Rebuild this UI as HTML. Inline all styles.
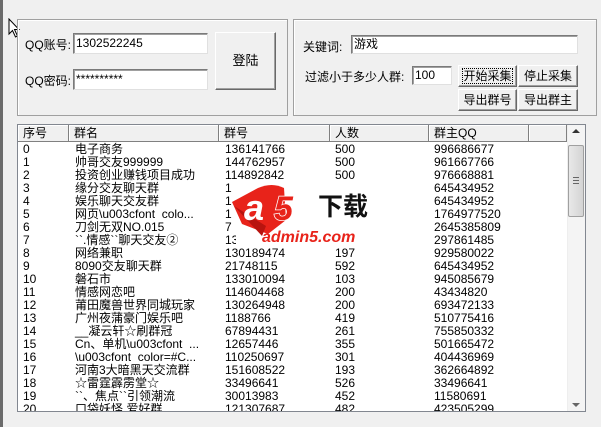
<!DOCTYPE html>
<html><head><meta charset="utf-8"><style>
*{margin:0;padding:0;box-sizing:border-box}
body{width:601px;height:427px;background:#f0f0f0;position:relative;overflow:hidden;font-family:"Liberation Sans","Noto Sans CJK SC",sans-serif;font-size:12px;color:#000}
.a{position:absolute}
.grp{position:absolute;border:1px solid #a0a0a0;box-shadow:inset 1px 1px 0 #fff}
.inp{position:absolute;background:#fff;border:1px solid #7a7a7a;border-right-color:#e0e0e0;border-bottom-color:#e0e0e0;box-shadow:inset 1px 1px 0 #a0a0a0;font-size:12px;line-height:16px;padding-left:2px}
.btn{position:absolute;background:#f0f0f0;border:1px solid;border-color:#fff #696969 #696969 #fff;box-shadow:inset -1px -1px 0 #a0a0a0;text-align:center;font-size:12px}
.list{position:absolute;left:17px;top:124px;width:569px;height:288px;background:#fff;border:1px solid #828790;overflow:hidden}
.hd{position:absolute;top:0;height:17px;background:#f0f0f0;border-right:1px solid #808080;border-bottom:1px solid #808080;box-shadow:inset 1px 1px 0 #fff;padding-left:5px;line-height:16px}
.row{position:absolute;left:0;height:13px;line-height:13px;white-space:pre;font-size:12px}
.row span{position:absolute;top:0}
</style></head><body>
<div class="a" style="left:0;top:0;width:3px;height:427px;background:#6b6b6b"></div>
<svg class="a" style="left:8px;top:18px" width="14" height="20"><path d="M1 1 L1 16 L4.5 12.5 L7.5 19 L9.5 18 L6.5 11.5 L11 11.5 Z" fill="#fff" stroke="#000" stroke-width="1"/></svg>

<div class="grp" style="left:17px;top:19px;width:271px;height:97px"></div>
<div class="a" style="left:25px;top:36px">QQ账号:</div>
<div class="inp" style="left:73px;top:33px;width:135px;height:21px;line-height:19px">1302522245</div>
<div class="a" style="left:25px;top:72px">QQ密码:</div>
<div class="inp" style="left:73px;top:69px;width:135px;height:21px;line-height:19px">**********</div>
<div class="btn" style="left:215px;top:32px;width:61px;height:58px;line-height:56px;font-size:13px">登陆</div>

<div class="grp" style="left:293px;top:19px;width:304px;height:97px"></div>
<div class="a" style="left:303px;top:38px">关键词:</div>
<div class="inp" style="left:351px;top:35px;width:227px;height:19px;line-height:17px">游戏</div>
<div class="a" style="left:305px;top:68px">过滤小于多少人群:</div>
<div class="inp" style="left:412px;top:66px;width:40px;height:19px;line-height:17px">100</div>
<div class="btn" style="left:458px;top:65px;width:59px;height:22px;line-height:20px"><span style="outline:1px dotted #000;outline-offset:0">开始采集</span></div>
<div class="btn" style="left:518px;top:65px;width:60px;height:22px;line-height:20px">停止采集</div>
<div class="btn" style="left:458px;top:89px;width:59px;height:22px;line-height:20px">导出群号</div>
<div class="btn" style="left:518px;top:89px;width:60px;height:22px;line-height:20px">导出群主</div>

<div class="list">
<div class="hd" style="left:0;width:51px">序号</div>
<div class="hd" style="left:51px;width:150px">群名</div>
<div class="hd" style="left:201px;width:111px">群号</div>
<div class="hd" style="left:312px;width:99px">人数</div>
<div class="hd" style="left:411px;width:100px">群主QQ</div>
<div class="hd" style="left:511px;width:38px"></div>
<div id="rows"></div>
<div class="a" style="left:549px;top:0;width:18px;height:286px;background:#f4f4f4;border-left:1px solid #eee"></div>
<div class="a" style="left:554px;top:4px;width:0;height:0;border-left:4px solid transparent;border-right:4px solid transparent;border-bottom:4px solid #333"></div>
<div class="a" style="left:550px;top:20px;width:16px;height:72px;background:linear-gradient(90deg,#e8e8e8,#d4d4d4);border:1px solid #a0a0a0;border-radius:2px"></div>
<div class="a" style="left:555px;top:52px;width:6px;height:7px;border-top:1px solid #666;border-bottom:1px solid #666"></div>
<div class="a" style="left:555px;top:55px;width:6px;height:1px;background:#666"></div>
<div class="a" style="left:554px;top:278px;width:0;height:0;border-left:4px solid transparent;border-right:4px solid transparent;border-top:4px solid #666"></div>
</div>

<!-- watermark -->
<div class="a" style="left:236px;top:182px;width:136px;height:62px;background:#fff"></div>
<svg class="a" style="left:228px;top:180px" width="150" height="66">
<path d="M4 22 L30 8 Q44 2 56 8 L58 40 L40 54 L14 44 Z" fill="#e8231a"/>
<path d="M6 26 L34 56 L38 46 Z" fill="#b8140f"/>
<text x="16" y="40" font-family="Liberation Sans,sans-serif" font-weight="bold" font-style="italic" font-size="36" fill="#fff">a</text>
<text x="46" y="40" font-family="Liberation Sans,sans-serif" font-weight="bold" font-style="italic" font-size="34" fill="#e8231a" stroke="#fff" stroke-width="1.5" paint-order="stroke">5</text>
<text x="90" y="35" font-family="Noto Sans CJK SC,sans-serif" font-weight="bold" font-size="25" fill="#111">下载</text>
<text x="34" y="62" font-family="Liberation Sans,sans-serif" font-weight="bold" font-style="italic" font-size="16" fill="#e8231a">admin5.com</text>
</svg>

<script>
var d=[["0","电子商务","136141766","500","996686677"],["1","帅哥交友999999","144762957","500","961667766"],["2","投资创业赚钱项目成功","114892842","500","976668881"],["3","缘分交友聊天群","1","","645434952"],["4","娱乐聊天交友群","1","","645434952"],["5","网页\\u003cfont  colo...","1","","1764977520"],["6","刀剑无双NO.015","7","","2645385809"],["7","``.情感``聊天交友②","131011742","101","297861485"],["8","网络兼职","130189474","197","929580022"],["9","8090交友聊天群","21748115","592","645434952"],["10","磐石市","133010094","103","945085679"],["11","情感网恋吧","114604468","200","43434820"],["12","莆田魔兽世界同城玩家","130264948","200","693472133"],["13","广州夜蒲豪门娱乐吧","1188766","419","510775416"],["14","__凝云轩☆刷群冠","67894431","261","755850332"],["15","Cn、单机\\u003cfont  ...","12657446","355","501665472"],["16","\\u003cfont  color=#C...","110250697","301","404436969"],["17","河南3大暗黑天交流群","151608522","193","362664892"],["18","☆雷霆霹雳堂☆","33496641","526","33496641"],["19","``、焦点``引领潮流","30013983","452","11580691"],["20","口袋妖怪 爱好群","121307687","482","423505299"]];
var h="",x=[5,57,207,317,416];
d.forEach(function(r,i){h+='<div class="row" style="top:'+(18+i*13)+'px">';r.forEach(function(c,j){h+='<span style="left:'+x[j]+'px">'+c.replace(/</g,"&lt;")+'</span>'});h+='</div>'});
document.getElementById("rows").innerHTML=h;
</script>
</body></html>
